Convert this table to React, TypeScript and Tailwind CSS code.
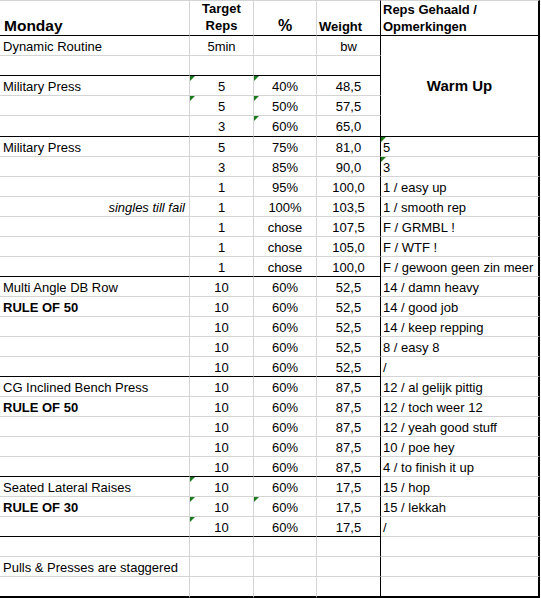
import React from "react";

type Line = "gray" | "black" | "thick";
type Row = {
  a?: string;
  aStyle?: "normal" | "bold" | "italic";
  b?: string;
  c?: string;
  d?: string;
  e?: string;
  tri?: ("b" | "c" | "e")[];
  line: Line;
  eLine?: Line;
};

const rows: Row[] = [
  { a: "Dynamic Routine", b: "5min", d: "bw", line: "gray" },
  { line: "black" },
  { a: "Military Press", b: "5", c: "40%", d: "48,5", tri: ["b", "c"], line: "gray" },
  { b: "5", c: "50%", d: "57,5", tri: ["b", "c"], line: "gray" },
  { b: "3", c: "60%", d: "65,0", tri: ["c"], line: "black" },
  { a: "Military Press", b: "5", c: "75%", d: "81,0", e: "5", tri: ["e"], line: "gray" },
  { b: "3", c: "85%", d: "90,0", e: "3", tri: ["e"], line: "gray" },
  { b: "1", c: "95%", d: "100,0", e: "1 / easy up", line: "gray" },
  { a: "singles till fail", aStyle: "italic", b: "1", c: "100%", d: "103,5", e: "1 / smooth rep", line: "gray" },
  { b: "1", c: "chose", d: "107,5", e: "F / GRMBL !", line: "gray" },
  { b: "1", c: "chose", d: "105,0", e: "F / WTF !", line: "gray" },
  { b: "1", c: "chose", d: "100,0", e: "F / gewoon geen zin meer", line: "black" },
  { a: "Multi Angle DB Row", b: "10", c: "60%", d: "52,5", e: "14 / damn heavy", line: "gray" },
  { a: "RULE OF 50", aStyle: "bold", b: "10", c: "60%", d: "52,5", e: "14 / good job", line: "gray" },
  { b: "10", c: "60%", d: "52,5", e: "14 / keep repping", line: "gray" },
  { b: "10", c: "60%", d: "52,5", e: "8 / easy 8", line: "gray" },
  { b: "10", c: "60%", d: "52,5", e: "/", line: "black" },
  { a: "CG Inclined Bench Press", b: "10", c: "60%", d: "87,5", e: "12 / al gelijk pittig", line: "gray" },
  { a: "RULE OF 50", aStyle: "bold", b: "10", c: "60%", d: "87,5", e: "12 / toch weer 12", line: "gray" },
  { b: "10", c: "60%", d: "87,5", e: "12 / yeah good stuff", line: "gray" },
  { b: "10", c: "60%", d: "87,5", e: "10 / poe hey", line: "gray" },
  { b: "10", c: "60%", d: "87,5", e: "4 / to finish it up", line: "black" },
  { a: "Seated Lateral Raises", b: "10", c: "60%", d: "17,5", e: "15 / hop", tri: ["b"], line: "gray" },
  { a: "RULE OF 30", aStyle: "bold", b: "10", c: "60%", d: "17,5", e: "15 / lekkah", tri: ["b", "c"], line: "gray" },
  { b: "10", c: "60%", d: "17,5", e: "/", tri: ["b"], line: "black" },
  { line: "gray" },
  { a: "Pulls & Presses are staggered", line: "gray" },
  { line: "thick", eLine: "thick" },
];

function bottom(line: Line) {
  if (line === "gray") return "border-b border-b-[#d4d4d4]";
  if (line === "black") return "border-b border-b-black";
  return "border-b-2 border-b-black";
}

function Tri() {
  return (
    <span className="absolute left-0 top-0 h-0 w-0 border-t-[5px] border-r-[5px] border-t-[#1e7a1e] border-r-transparent" />
  );
}

const cellBase = "relative pt-[1px] leading-[19px] text-[13px] whitespace-nowrap";

export default function App() {
  const cells: React.ReactNode[] = [];
  rows.forEach((r, i) => {
    const bl = bottom(r.line);
    const aCls =
      r.aStyle === "italic"
        ? "italic text-[11.5px] text-right pr-[4px]"
        : r.aStyle === "bold"
        ? "font-bold pl-[3px]"
        : "pl-[3px]";
    cells.push(
      <div key={`a${i}`} className={`${cellBase} ${bl} border-r border-r-[#d4d4d4] ${aCls}`}>
        {r.a}
      </div>
    );
    cells.push(
      <div key={`b${i}`} className={`${cellBase} ${bl} border-r border-r-[#d4d4d4] text-center`}>
        {r.tri?.includes("b") && <Tri />}
        {r.b}
      </div>
    );
    cells.push(
      <div key={`c${i}`} className={`${cellBase} ${bl} border-r border-r-[#d4d4d4] text-center`}>
        {r.tri?.includes("c") && <Tri />}
        {r.c}
      </div>
    );
    cells.push(
      <div key={`d${i}`} className={`${cellBase} ${bl} border-r border-r-black text-center`}>
        {r.d}
      </div>
    );
    if (i === 0) {
      cells.push(
        <div
          key="warm"
          className="row-span-5 flex items-center justify-center border-b border-b-black border-r-2 border-r-black text-[15px] font-bold"
        >
          Warm Up
        </div>
      );
    } else if (i >= 5) {
      cells.push(
        <div
          key={`e${i}`}
          className={`${cellBase} ${bottom(r.eLine ?? "gray")} border-r-2 border-r-black pl-[2px]`}
        >
          {r.tri?.includes("e") && <Tri />}
          {r.e}
        </div>
      );
    }
  });

  return (
    <div
      className="w-[541px] h-[598px] bg-white text-black overflow-hidden"
      style={{ fontFamily: '"Liberation Sans", Arial, sans-serif' }}
    >
      <div className="grid w-[540px] grid-cols-[190px_64px_63px_64px_159px] grid-rows-[36px_repeat(4,20px)_21px_repeat(22,20px)_21px]">
        {/* header */}
        <div className="flex flex-col justify-end border-t border-t-[#d4d4d4] border-b border-b-black border-r border-r-[#d4d4d4] pl-[4px] pb-[1px] text-[15.5px] font-bold leading-[17px]">
          Monday
        </div>
        <div className="flex flex-col justify-end border-t border-t-[#d4d4d4] border-b border-b-black border-r border-r-[#d4d4d4] pb-[1px] text-center text-[13px] font-bold leading-[17px]">
          <span>Target</span>
          <span>Reps</span>
        </div>
        <div className="flex flex-col justify-end border-t border-t-[#d4d4d4] border-b border-b-black border-r border-r-[#d4d4d4] pb-[1px] text-center text-[16px] font-bold leading-[17px]">
          %
        </div>
        <div className="flex flex-col justify-end border-t border-t-[#d4d4d4] border-b border-b-black border-r border-r-black pl-[2px] text-[13px] font-bold leading-[17px]">
          Weight
        </div>
        <div className="flex flex-col justify-end border-t border-t-[#d4d4d4] border-b border-b-black border-r-2 border-r-black pl-[2px] text-[13px] font-bold leading-[17px]">
          <span>Reps Gehaald /</span>
          <span>Opmerkingen</span>
        </div>
        {cells}
      </div>
    </div>
  );
}
